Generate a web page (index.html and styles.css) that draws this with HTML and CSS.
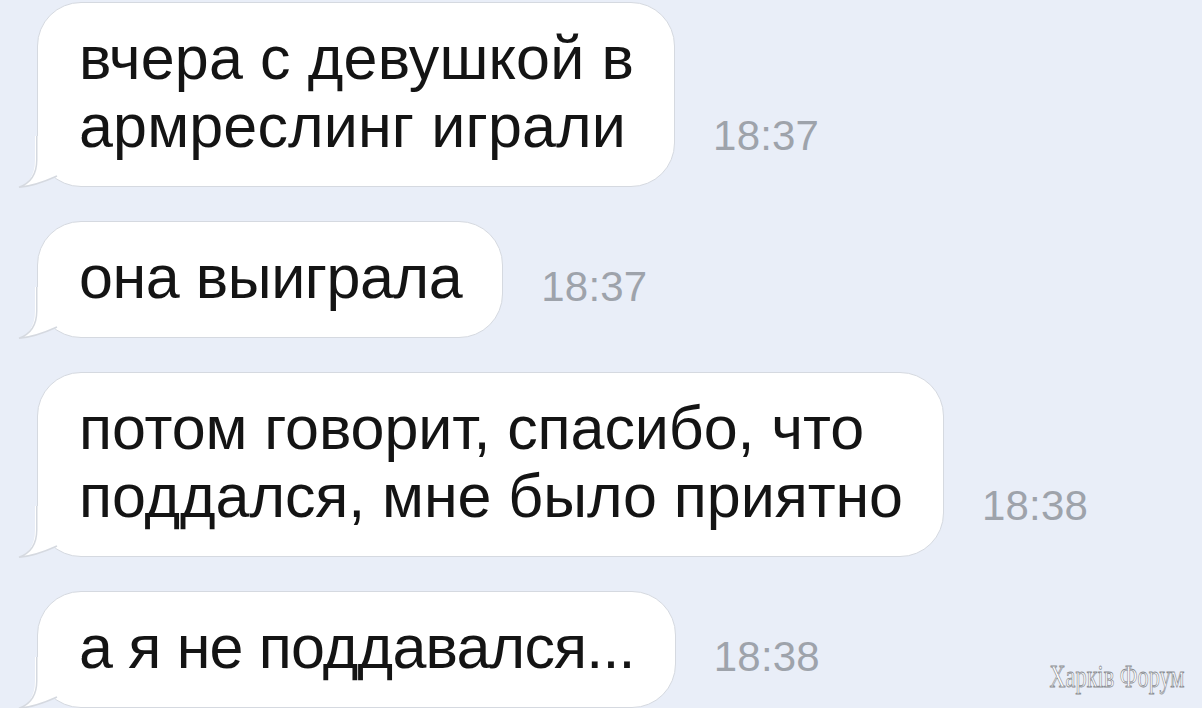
FILE: index.html
```html
<!DOCTYPE html>
<html lang="ru">
<head>
<meta charset="utf-8">
<title>Chat</title>
<link rel="stylesheet" href="styles.css">
</head>
<body>
<div class="chat">
  <div class="row">
    <div class="bubble">вчера с девушкой в<br>армреслинг играли
      <svg class="tail" width="64" height="52" viewBox="0 0 64 52"><path class="tail-fill" d="M17,0 L17,24 C17,40 10,48 1,51.2 C12,50.5 28,45 39,40 L64,0 Z"/><path class="tail-line" d="M18.75,0 L18.75,24 C18.75,40 10,48 1,51.2 C12,50.5 28,45 39,40"/></svg>
    </div>
    <span class="time">18:37</span>
  </div>
  <div class="row">
    <div class="bubble bubble-narrow">она выиграла
      <svg class="tail" width="64" height="52" viewBox="0 0 64 52"><path class="tail-fill" d="M17,0 L17,24 C17,40 10,48 1,51.2 C12,50.5 28,45 39,40 L64,0 Z"/><path class="tail-line" d="M18.75,0 L18.75,24 C18.75,40 10,48 1,51.2 C12,50.5 28,45 39,40"/></svg>
    </div>
    <span class="time">18:37</span>
  </div>
  <div class="row">
    <div class="bubble bubble-slight">потом говорит, спасибо, что<br>поддался, мне было приятно
      <svg class="tail" width="64" height="52" viewBox="0 0 64 52"><path class="tail-fill" d="M17,0 L17,24 C17,40 10,48 1,51.2 C12,50.5 28,45 39,40 L64,0 Z"/><path class="tail-line" d="M18.75,0 L18.75,24 C18.75,40 10,48 1,51.2 C12,50.5 28,45 39,40"/></svg>
    </div>
    <span class="time">18:38</span>
  </div>
  <div class="row">
    <div class="bubble bubble-tight">а я не поддавался...
      <svg class="tail" width="64" height="52" viewBox="0 0 64 52"><path class="tail-fill" d="M17,0 L17,24 C17,40 10,48 1,51.2 C12,50.5 28,45 39,40 L64,0 Z"/><path class="tail-line" d="M18.75,0 L18.75,24 C18.75,40 10,48 1,51.2 C12,50.5 28,45 39,40"/></svg>
    </div>
    <span class="time">18:38</span>
  </div>
</div>
<div class="watermark">Харків Форум</div>
</body>
</html>
```

FILE: styles.css
```css
html, body {
  margin: 0;
  padding: 0;
  height: 100%;
  overflow: hidden;
}
body {
  background: #e9eef8;
  font-family: "Liberation Sans", Arial, sans-serif;
  position: relative;
}
.chat {
  display: flex;
  flex-direction: column;
  align-items: flex-start;
  gap: 34px;
  padding: 2px 0 0 37px;
}
.row {
  display: flex;
  align-items: flex-end;
}
.bubble {
  position: relative;
  background: #ffffff;
  border: 1.5px solid #d5d9e0;
  border-radius: 44px;
  padding: 21px 40px 26px 41px;
  font-size: 61px;
  line-height: 68px;
  letter-spacing: 0.15px;
  color: #141414;
  white-space: nowrap;
}
.bubble-narrow {
  letter-spacing: -0.43px;
}
.bubble-slight {
  letter-spacing: -0.07px;
}
.bubble-tight {
  letter-spacing: -0.8px;
}
.tail {
  position: absolute;
  left: -20px;
  bottom: -1.5px;
  overflow: visible;
}
.tail-fill {
  fill: #ffffff;
}
.tail-line {
  fill: none;
  stroke: #d5d9e0;
  stroke-width: 1.5;
}
.time {
  margin-left: 38px;
  margin-bottom: 30px;
  font-size: 42px;
  line-height: 42px;
  letter-spacing: 0.2px;
  color: #9ea3ab;
}
.watermark {
  position: absolute;
  right: 18px;
  bottom: 16px;
  font-family: "Liberation Serif", "DejaVu Serif", serif;
  font-size: 31px;
  line-height: 31px;
  color: #ffffff;
  -webkit-text-stroke: 0.8px #8a8d92;
  transform: scaleX(0.72);
  transform-origin: right bottom;
}
```
